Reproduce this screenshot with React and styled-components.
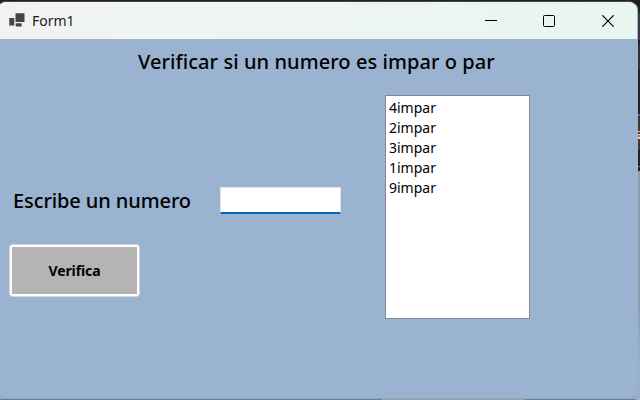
import React from "react";
import styled, { createGlobalStyle } from "styled-components";

const GlobalStyle = createGlobalStyle`
  * { box-sizing: border-box; }
  html, body { margin: 0; width: 640px; height: 400px; overflow: hidden; }
  body { font-family: "Noto Sans", sans-serif; color: #000; }
`;

const Desktop = styled.div`
  width: 640px;
  height: 400px;
  padding-top: 1px;
  overflow: hidden;
  background:
    linear-gradient(#a0a0a0, #a0a0a0) 382px 399px / 143px 1px no-repeat,
    linear-gradient(#6d7f96, #6d7f96) 0 399px / 636px 1px no-repeat,
    linear-gradient(#d8d0c8 0 1px, transparent 1px 3px, #d8d0c8 3px 4px, #b06a50 4px 6px, #d8d0c8 6px 7px) 638px 131px / 2px 8px no-repeat,
    linear-gradient(#221f20 0 13px, #3c3a3b 13px 40px, #221f20 40px 44px, #333132 44px 70px, #221f20 70px 114px, #6650b0 114px 116px, #4a3620 116px 150px, #231f20 150px 166px, #777 166px 167px, #231f20 167px 171px, #8d9cab 171px 300px, #9aafc8 360px);
`;

const Window = styled.main`
  display: flex;
  flex-direction: column;
  width: 641px;
  height: 398px;
  margin-left: -3px;
  border: 1px solid #99b3d0;
  border-top-color: #454545;
  border-bottom-color: #8ea5bf;
  border-radius: 9px;
  overflow: hidden;
  background: #99b3d0;
`;

const TitleBar = styled.header`
  display: flex;
  align-items: center;
  height: 37px;
  flex: none;
  margin-right: -1px;
  padding-left: 11px;
  background: linear-gradient(90deg, #f1f3f3 0%, #f0f4f3 30%, #e8f6f0 100%);
`;

const AppName = styled.span`
  flex: 1;
  margin-left: 7px;
  font-size: 14px;
  line-height: 20px;
  color: #1b1b1b;
`;

const Caption = styled.button`
  display: flex;
  align-items: center;
  justify-content: center;
  width: 58.5px;
  height: 37px;
  padding: 0;
  border: 0;
  background: transparent;

  &:last-child {
    margin-right: 1px;
  }
`;

const Form = styled.section`
  display: grid;
  grid-template-columns: 375px 145px;
  grid-template-rows: 56px 224px;
  padding-left: 12px;
`;

const Heading = styled.h1`
  grid-column: 1 / -1;
  margin: 8px 0 0 128px;
  font-size: 20px;
  line-height: 30px;
  font-weight: 500;
  white-space: nowrap;
  letter-spacing: 0.07px;
`;

const Controls = styled.div`
  padding-top: 92px;
`;

const Field = styled.label`
  display: flex;
  align-items: flex-start;
  height: 28px;
`;

const FieldLabel = styled.span`
  width: 210px;
  padding-left: 3px;
  font-size: 20px;
  line-height: 28px;
  font-weight: 500;
  white-space: nowrap;
  letter-spacing: -0.1px;
`;

const NumberInput = styled.input`
  width: 121px;
  height: 27px;
  padding: 0 4px;
  border: 1px solid #e0e4e8;
  border-bottom: 2px solid #0067c0;
  border-radius: 1px;
  outline: 0;
  background: #fff;
`;

const VerifyButton = styled.button`
  display: block;
  width: 131px;
  height: 53px;
  margin: 29px 0 0 -1px;
  padding: 0;
  border: 1px solid #d5d5d5;
  border-radius: 3px;
  box-shadow: inset 0 0 0 2px #fff;
  background: #b4b4b4;
  font: 700 14px/20px "Noto Sans", sans-serif;
  letter-spacing: -0.1px;
  color: #000;
`;

const Results = styled.ul`
  width: 145px;
  height: 224px;
  margin: 0;
  padding: 2px 3px;
  border: 1px solid #828790;
  background: #fff;
  list-style: none;
`;

const Result = styled.li`
  height: 20px;
  font-size: 14px;
  line-height: 20px;
`;

const results = ["4impar", "2impar", "3impar", "1impar", "9impar"];

export default function App() {
  return (
    <>
      <GlobalStyle />
      <Desktop>
        <Window>
          <TitleBar>
            <svg width="16" height="15" viewBox="0 0 16 15" fill="#444">
              <path d="M.3 4.3h5v7.4h-5zM6.5-.5h9v8.7h-9zM6.7 9.5h6v3.2h-6z" transform="translate(0 .8)" />
            </svg>
            <AppName>Form1</AppName>
            <Caption aria-label="Minimizar">
              <svg width="12" height="12" viewBox="0 0 12 12" stroke="#000"><path d="M0 5.5h12" /></svg>
            </Caption>
            <Caption aria-label="Maximizar">
              <svg width="12" height="12" viewBox="0 0 12 12" fill="none" stroke="#000"><rect x=".5" y=".5" width="11" height="11" rx="1" /></svg>
            </Caption>
            <Caption aria-label="Cerrar">
              <svg width="12" height="12" viewBox="0 0 12 12" stroke="#000" strokeWidth="1.2"><path d="M.3.3l11.4 11.4M11.7.3L.3 11.7" /></svg>
            </Caption>
          </TitleBar>
          <Form>
            <Heading>Verificar si un numero es impar o par</Heading>
            <Controls>
              <Field>
                <FieldLabel>Escribe un numero</FieldLabel>
                <NumberInput />
              </Field>
              <VerifyButton>Verifica</VerifyButton>
            </Controls>
            <Results>
              {results.map((r) => <Result key={r}>{r}</Result>)}
            </Results>
          </Form>
        </Window>
      </Desktop>
    </>
  );
}
